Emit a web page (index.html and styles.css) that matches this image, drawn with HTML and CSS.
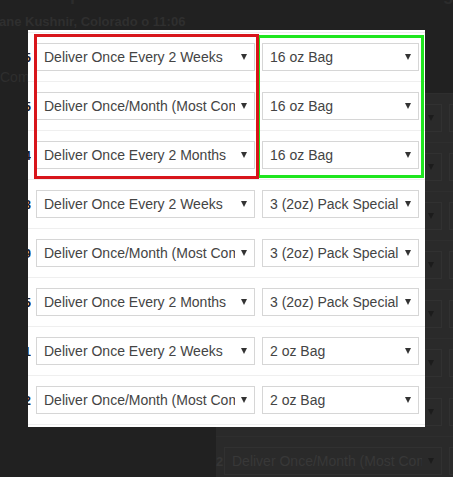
FILE: index.html
```html
<!DOCTYPE html>
<html lang="en">
<head>
  <meta charset="UTF-8" />
  <title>Subscription orders</title>
  <link rel="stylesheet" href="styles.css">
</head>
<body>
  <div class="screen">
    <!-- page behind the dim overlay -->
    <div class="bg-page">
      <div class="bg-title">Subscription Orders To Be Converted Into Recurring Orders For Review</div>
      <div class="bg-meta">Diane Kushnir, Colorado o 11:06</div>
      <div class="bg-note">Comments</div>

      <div class="bg-table">
        <div class="bg-row"><span class="bg-num">5</span><span class="bg-select"><span class="txt">Deliver Once Every 2 Weeks</span><i class="caret"></i></span><span class="bg-select"><span class="txt">16 oz Bag</span><i class="caret"></i></span></div>
        <div class="bg-row"><span class="bg-num">5</span><span class="bg-select"><span class="txt">Deliver Once/Month (Most Common)</span><i class="caret"></i></span><span class="bg-select"><span class="txt">16 oz Bag</span><i class="caret"></i></span></div>
        <div class="bg-row"><span class="bg-num">4</span><span class="bg-select"><span class="txt">Deliver Once Every 2 Months</span><i class="caret"></i></span><span class="bg-select"><span class="txt">16 oz Bag</span><i class="caret"></i></span></div>
        <div class="bg-row"><span class="bg-num">8</span><span class="bg-select"><span class="txt">Deliver Once Every 2 Weeks</span><i class="caret"></i></span><span class="bg-select"><span class="txt">3 (2oz) Pack Special</span><i class="caret"></i></span></div>
        <div class="bg-row"><span class="bg-num">9</span><span class="bg-select"><span class="txt">Deliver Once/Month (Most Common)</span><i class="caret"></i></span><span class="bg-select"><span class="txt">3 (2oz) Pack Special</span><i class="caret"></i></span></div>
        <div class="bg-row"><span class="bg-num">5</span><span class="bg-select"><span class="txt">Deliver Once Every 2 Months</span><i class="caret"></i></span><span class="bg-select"><span class="txt">3 (2oz) Pack Special</span><i class="caret"></i></span></div>
        <div class="bg-row"><span class="bg-num">1</span><span class="bg-select"><span class="txt">Deliver Once Every 2 Weeks</span><i class="caret"></i></span><span class="bg-select"><span class="txt">2 oz Bag</span><i class="caret"></i></span></div>
        <div class="bg-row"><span class="bg-num">2</span><span class="bg-select"><span class="txt">Deliver Once/Month (Most Common)</span><i class="caret"></i></span><span class="bg-select"><span class="txt">2 oz Bag</span><i class="caret"></i></span></div>
      </div>
    </div>

    <!-- zoomed panel -->
    <div class="modal">
      <div class="row"><span class="num">5</span><span class="select freq"><span class="txt">Deliver Once Every 2 Weeks</span><i class="caret"></i></span><span class="select size"><span class="txt">16 oz Bag</span><i class="caret"></i></span></div>
      <div class="row"><span class="num">5</span><span class="select freq"><span class="txt">Deliver Once/Month (Most Common)</span><i class="caret"></i></span><span class="select size"><span class="txt">16 oz Bag</span><i class="caret"></i></span></div>
      <div class="row"><span class="num">4</span><span class="select freq"><span class="txt">Deliver Once Every 2 Months</span><i class="caret"></i></span><span class="select size"><span class="txt">16 oz Bag</span><i class="caret"></i></span></div>
      <div class="row"><span class="num">8</span><span class="select freq"><span class="txt">Deliver Once Every 2 Weeks</span><i class="caret"></i></span><span class="select size"><span class="txt">3 (2oz) Pack Special</span><i class="caret"></i></span></div>
      <div class="row"><span class="num">9</span><span class="select freq"><span class="txt">Deliver Once/Month (Most Common)</span><i class="caret"></i></span><span class="select size"><span class="txt">3 (2oz) Pack Special</span><i class="caret"></i></span></div>
      <div class="row"><span class="num">5</span><span class="select freq"><span class="txt">Deliver Once Every 2 Months</span><i class="caret"></i></span><span class="select size"><span class="txt">3 (2oz) Pack Special</span><i class="caret"></i></span></div>
      <div class="row"><span class="num">1</span><span class="select freq"><span class="txt">Deliver Once Every 2 Weeks</span><i class="caret"></i></span><span class="select size"><span class="txt">2 oz Bag</span><i class="caret"></i></span></div>
      <div class="row last"><span class="num">2</span><span class="select freq"><span class="txt">Deliver Once/Month (Most Common)</span><i class="caret"></i></span><span class="select size"><span class="txt">2 oz Bag</span><i class="caret"></i></span></div>

      <div class="mark mark-green"></div>
      <div class="mark mark-red"></div>
    </div>
  </div>
</body>
</html>
```

FILE: styles.css
```css
* {
  box-sizing: border-box;
}

body {
  margin: 0;
  background: #212121;
  font-family: 'Liberation Sans', Arial, sans-serif;
  overflow: hidden;
}

.screen {
  position: relative;
  width: 453px;
  height: 477px;
  overflow: hidden;
}

/* page behind the overlay */
.bg-title {
  margin-top: -16px;
  padding-left: 4px;
  font-size: 18px;
  line-height: 20px;
  font-weight: bold;
  color: #2c2c2c;
  white-space: nowrap;
}

.bg-meta {
  margin: 10px 0 0 -14px;
  font-size: 13px;
  line-height: 16px;
  font-weight: bold;
  color: #2f2f2f;
  white-space: nowrap;
}

.bg-note {
  margin-top: 39px;
  font-size: 14px;
  line-height: 16px;
  color: #2e2e2e;
}

.bg-table {
  margin: 8px 0 0 216px;
  background: #2a2a2a;
}

.bg-row {
  display: flex;
  align-items: center;
  height: 49px;
  padding: 10px 0;
  border-top: 1px solid #2e2e2e;
}

.bg-num {
  width: 7px;
  margin-right: 1px;
  font-size: 13px;
  font-weight: bold;
  color: #363636;
  text-align: right;
}

.bg-select {
  display: flex;
  align-items: center;
  flex: none;
  width: 218px;
  height: 28px;
  margin-right: 7px;
  padding: 0 7px;
  border: 1px solid #313131;
  font-size: 14px;
  color: #383838;
}

.bg-select .caret {
  border-top-color: #1c1c1c;
}

/* zoomed panel */
.modal {
  position: absolute;
  left: 28px;
  top: 30px;
  width: 397px;
  height: 397px;
  padding-top: 2px;
  background: #fff;
  overflow: hidden;
}

.row {
  display: flex;
  align-items: center;
  height: 49px;
  padding: 10px 0;
  border-top: 1px solid #efefef;
}

.row.last {
  border-bottom: 1px solid #efefef;
  height: 50px;
}

.num {
  display: flex;
  justify-content: flex-end;
  width: 3px;
  margin-right: 5px;
  overflow: hidden;
  font-size: 13px;
  font-weight: bold;
  color: #16202c;
}

.select {
  display: flex;
  align-items: center;
  flex: none;
  height: 28px;
  padding: 0 7px;
  border: 1px solid #d6d6d6;
  background: #fff;
  font-size: 14px;
  color: #444;
}

.select.freq {
  width: 219px;
  margin-right: 7px;
}

.select.size {
  width: 157px;
}

.txt {
  flex: 1;
  min-width: 0;
  overflow: hidden;
  white-space: nowrap;
}

.caret {
  flex: none;
  width: 0;
  height: 0;
  margin-left: 6px;
  border-left: 3px solid transparent;
  border-right: 3px solid transparent;
  border-top: 6px solid #333;
}

/* annotation boxes drawn over the panel */
.mark {
  position: absolute;
  border: 3px solid;
}

.mark-red {
  left: 6px;
  top: 4px;
  width: 225px;
  height: 145px;
  border-color: #d8151b;
}

.mark-green {
  left: 229px;
  top: 5px;
  width: 167px;
  height: 143px;
  border-color: #1fe61f;
}
```
